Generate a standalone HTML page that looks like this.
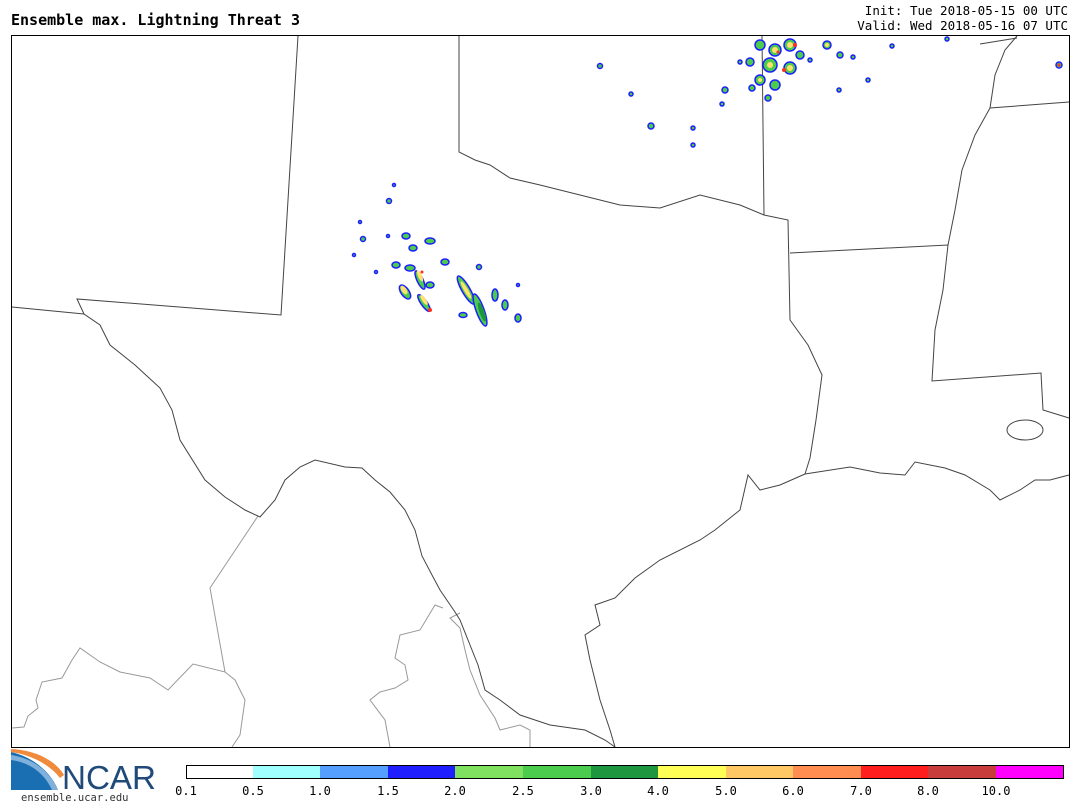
<!DOCTYPE html>
<html><head><meta charset="utf-8"><style>
html,body{margin:0;padding:0;background:#fff;width:1080px;height:810px;overflow:hidden;font-family:"DejaVu Sans Mono","Liberation Mono",monospace}
</style></head><body>
<svg width="1080" height="810" viewBox="0 0 1080 810" xmlns="http://www.w3.org/2000/svg" style="position:absolute;left:0;top:0">
<text x="11" y="25" font-family="DejaVu Sans Mono, Liberation Mono, monospace" font-weight="bold" font-size="15" fill="#000">Ensemble max. Lightning Threat 3</text>
<text x="1068" y="15" text-anchor="end" font-family="DejaVu Sans Mono, Liberation Mono, monospace" font-size="12.5" fill="#000">Init: Tue 2018-05-15 00 UTC</text>
<text x="1068" y="30" text-anchor="end" font-family="DejaVu Sans Mono, Liberation Mono, monospace" font-size="12.5" fill="#000">Valid: Wed 2018-05-16 07 UTC</text>
<g fill="none" stroke-width="1">
<g stroke="#999">
<polyline points="258,516 210,588 225,672 193,664 168,690 150,678 120,672 100,662 80,648 72,660 62,678 42,682 36,700 38,708 28,716 24,727 12,728"/>
<polyline points="225,672 235,680 245,700 240,735 232,747"/>
<polyline points="443,608 435,605 420,630 400,635 395,658 405,665 408,680 395,688 380,692 370,700 385,720 390,747"/>
<polyline points="460,613 450,618 460,628 465,650 470,670 480,695 495,718 500,730 520,725 530,730 530,747"/>
</g>
<g stroke="#444">
<polyline points="298,36 281,315 77,299 84,314 100,325 110,345 135,365 160,388 172,410 180,440 205,480 225,497 245,510 260,517 275,500 285,480 300,467 315,460 345,467 362,468 375,480 390,492 405,510 415,530 422,556 432,575 440,590 455,612 460,620 470,645 478,665 485,690 500,700 520,715 550,725 585,730 605,740 615,747"/>
<polyline points="12,307 84,314"/>
<polyline points="459,36 459,152 475,160 490,165 510,178 540,185 580,195 620,205 660,208 700,195 740,205 764,215 788,220 790,320 808,345 822,375 816,420 810,458 805,474"/>
<polyline points="762,36 764,215"/>
<polyline points="790,253 948,245 943,290 935,330 932,381 1041,373 1043,410 1069,418"/>
<polyline points="805,474 780,485 760,490 748,475 740,510 715,530 700,540 660,560 635,578 615,598 595,605 600,625 585,635 590,660 600,700 610,730 615,747"/>
<polyline points="805,474 850,467 880,473 905,475 915,462 945,468 965,475 990,490 1000,500 1020,490 1035,480 1050,480 1069,475"/>
<polyline points="948,245 955,210 962,170 975,135 990,108 1069,102"/>
<polyline points="990,108 995,75 1005,50 1017,36"/>
<polyline points="980,44 1017,38"/>
<ellipse cx="1025" cy="430" rx="18" ry="10"/>
</g>
<rect x="11.5" y="35.5" width="1058" height="712" stroke="#000"/>
</g>
<!-- storms -->
<g stroke="#1e1eff" stroke-width="1.5">
<g fill="#4ccc4c">
<ellipse cx="466" cy="290" rx="4" ry="16" transform="rotate(-30 466 290)"/>
<ellipse cx="480" cy="310" rx="4" ry="17" transform="rotate(-20 480 310)"/>
<ellipse cx="405" cy="292" rx="4" ry="8" transform="rotate(-35 405 292)"/>
<ellipse cx="424" cy="303" rx="3" ry="10" transform="rotate(-35 424 303)"/>
<ellipse cx="420" cy="280" rx="3" ry="10" transform="rotate(-25 420 280)"/>
<ellipse cx="396" cy="265" rx="4" ry="3"/><ellipse cx="410" cy="268" rx="5" ry="3"/><ellipse cx="430" cy="285" rx="4" ry="3"/>
<ellipse cx="413" cy="248" rx="4" ry="3"/><ellipse cx="430" cy="241" rx="5" ry="3"/><ellipse cx="406" cy="236" rx="4" ry="3"/>
<ellipse cx="445" cy="262" rx="4" ry="3"/><ellipse cx="495" cy="295" rx="3" ry="6"/><ellipse cx="505" cy="305" rx="3" ry="5"/>
<ellipse cx="518" cy="318" rx="3" ry="4"/><ellipse cx="463" cy="315" rx="4" ry="2.5"/>
<circle cx="389" cy="201" r="2.5"/><circle cx="394" cy="185" r="1.5"/><circle cx="363" cy="239" r="2.5"/><circle cx="479" cy="267" r="2.5"/><circle cx="518" cy="285" r="1.5"/><circle cx="360" cy="222" r="1.5"/><circle cx="354" cy="255" r="1.5"/><circle cx="376" cy="272" r="1.5"/><circle cx="388" cy="236" r="1.5"/>
<circle cx="600" cy="66" r="2.5"/><circle cx="631" cy="94" r="2"/><circle cx="651" cy="126" r="3"/><circle cx="693" cy="128" r="2"/><circle cx="693" cy="145" r="2"/><circle cx="725" cy="90" r="3"/><circle cx="722" cy="104" r="2"/>
<circle cx="760" cy="45" r="5"/><circle cx="775" cy="50" r="6"/><circle cx="790" cy="45" r="6"/><circle cx="770" cy="65" r="7"/><circle cx="790" cy="68" r="6"/><circle cx="760" cy="80" r="5"/><circle cx="775" cy="85" r="5"/><circle cx="750" cy="62" r="4"/><circle cx="800" cy="55" r="4"/><circle cx="768" cy="98" r="3"/><circle cx="752" cy="88" r="3"/>
<circle cx="827" cy="45" r="4"/><circle cx="840" cy="55" r="3"/><circle cx="853" cy="57" r="2"/><circle cx="839" cy="90" r="2"/><circle cx="868" cy="80" r="2"/><circle cx="892" cy="46" r="2"/><circle cx="947" cy="39" r="2"/><circle cx="1059" cy="65" r="3"/><circle cx="740" cy="62" r="2"/><circle cx="810" cy="60" r="2"/>
</g>
</g>
<g fill="#ffe070">
<ellipse cx="466" cy="290" rx="2" ry="10" transform="rotate(-30 466 290)"/><ellipse cx="404" cy="290" rx="2.5" ry="5" transform="rotate(-35 404 290)"/><ellipse cx="424" cy="300" rx="2" ry="6" transform="rotate(-35 424 300)"/><ellipse cx="420" cy="276" rx="2" ry="6" transform="rotate(-25 420 276)"/>
<circle cx="775" cy="50" r="3"/><circle cx="790" cy="68" r="3"/><circle cx="770" cy="65" r="3"/><circle cx="760" cy="80" r="2"/><circle cx="790" cy="45" r="3"/><circle cx="827" cy="45" r="2"/></g>
<g fill="#1e9640"><ellipse cx="482" cy="312" rx="2.5" ry="10" transform="rotate(-20 482 312)"/></g>
<g fill="#ff3020"><circle cx="430" cy="310" r="2"/><circle cx="422" cy="272" r="1.5"/><circle cx="784" cy="70" r="2"/><circle cx="795" cy="45" r="2"/><circle cx="778" cy="52" r="1.5"/><circle cx="1059" cy="65" r="1.5"/></g>
<!-- NCAR logo -->
<path d="M11,752 L11,790 L58,790 C50,770 30,756 11,752 Z" fill="#1a6fb3"/>
<path d="M11,749 C35,750 55,760 64,775 L60,778 C50,765 32,755 11,752 Z" fill="#f08a3c"/>
<path d="M11,755 C30,758 48,768 58,790 L52,790 C44,772 28,762 11,760 Z" fill="#7fb1dc"/>
<text x="62" y="789" font-family="Liberation Sans, sans-serif" font-size="33" fill="#1f4a7a" textLength="94" lengthAdjust="spacingAndGlyphs">NCAR</text>
<text x="21" y="801" font-family="DejaVu Sans Mono, Liberation Mono, monospace" font-size="10.5" fill="#333">ensemble.ucar.edu</text>
<g stroke="none">
<rect x="186" y="765" width="67" height="13" fill="#fff"/>
<rect x="253" y="765" width="67" height="13" fill="#a0ffff"/>
<rect x="320" y="765" width="68" height="13" fill="#55a0ff"/>
<rect x="388" y="765" width="67" height="13" fill="#1e1eff"/>
<rect x="455" y="765" width="68" height="13" fill="#80e060"/>
<rect x="523" y="765" width="68" height="13" fill="#4ccc4c"/>
<rect x="591" y="765" width="67" height="13" fill="#1e9640"/>
<rect x="658" y="765" width="68" height="13" fill="#ffff55"/>
<rect x="726" y="765" width="67" height="13" fill="#ffc864"/>
<rect x="793" y="765" width="68" height="13" fill="#ff8c50"/>
<rect x="861" y="765" width="67" height="13" fill="#ff1e1e"/>
<rect x="928" y="765" width="68" height="13" fill="#c83c3c"/>
<rect x="996" y="765" width="68" height="13" fill="#ff00ff"/>
</g>
<rect x="186.5" y="765.5" width="877" height="13" fill="none" stroke="#000"/>
<g font-family="DejaVu Sans Mono, Liberation Mono, monospace" font-size="12" fill="#000" text-anchor="middle">
<text x="186" y="795">0.1</text><text x="253" y="795">0.5</text><text x="320" y="795">1.0</text><text x="388" y="795">1.5</text><text x="455" y="795">2.0</text><text x="523" y="795">2.5</text><text x="591" y="795">3.0</text><text x="658" y="795">4.0</text><text x="726" y="795">5.0</text><text x="793" y="795">6.0</text><text x="861" y="795">7.0</text><text x="928" y="795">8.0</text><text x="996" y="795">10.0</text>
</g>
</svg>
</body></html>
